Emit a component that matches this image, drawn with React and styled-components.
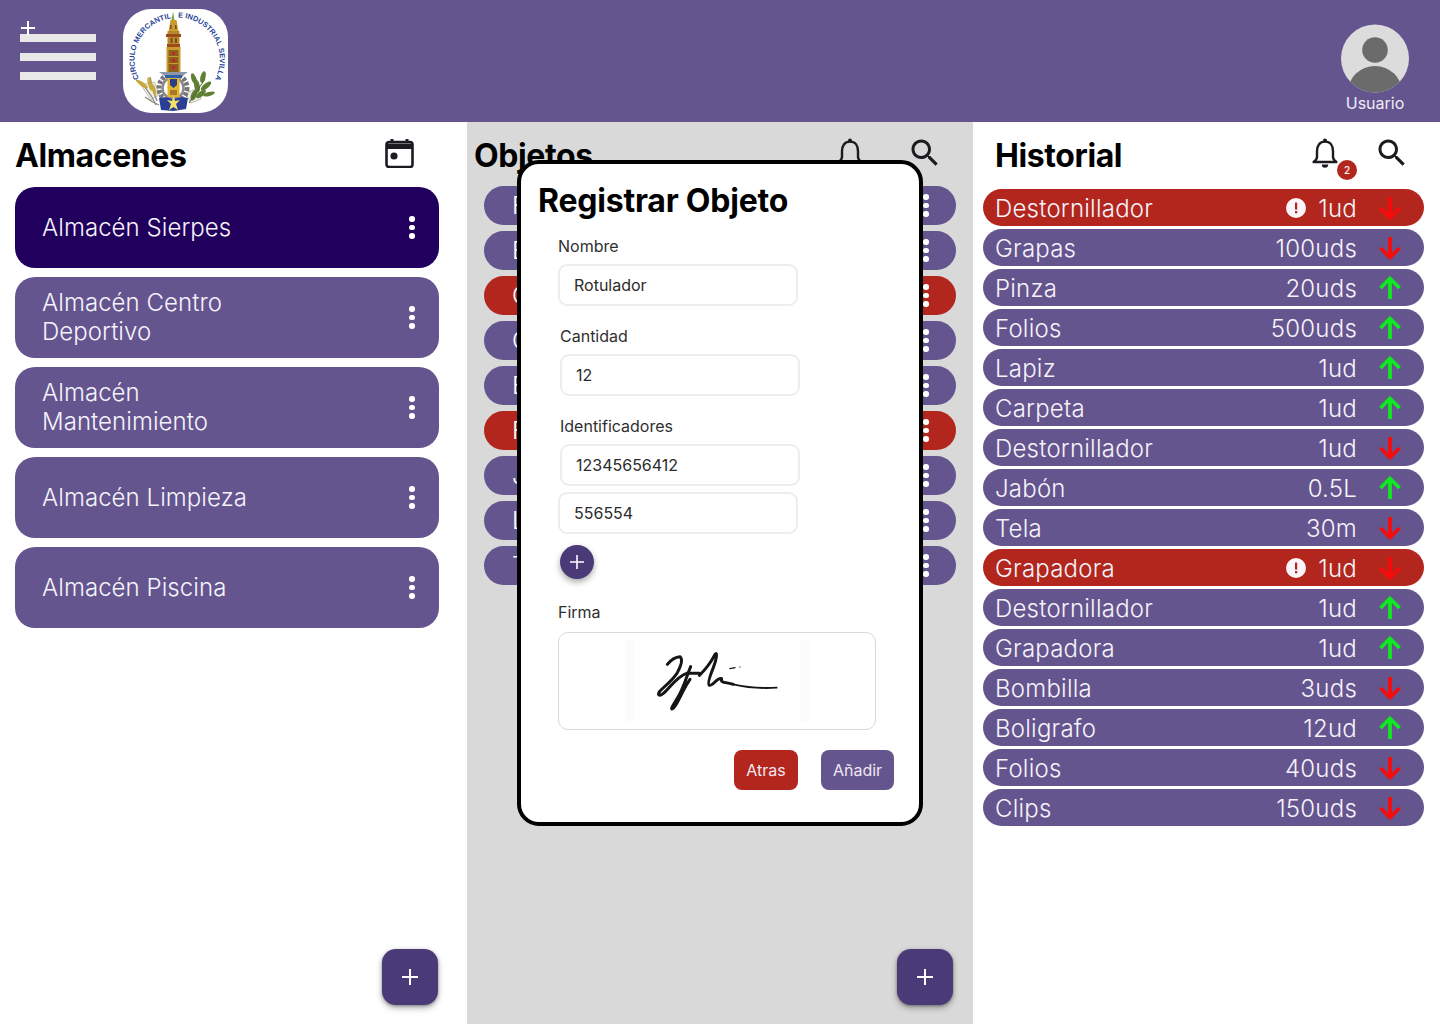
import React from "react";
import styled, { createGlobalStyle } from "styled-components";

const Global = createGlobalStyle`
  html, body { margin: 0; padding: 0; background: #fff; }
  body { font-family: Inter, "Liberation Sans", sans-serif; overflow: hidden; }
  * { box-sizing: border-box; }
`;

const Page = styled.div`
  width: 1440px;
  height: 1024px;
  display: flex;
  flex-direction: column;
  position: relative;
  overflow: hidden;
`;
const TopBar = styled.header`
  height: 122px;
  flex: none;
  background: #65558f;
  display: flex;
  align-items: flex-start;
  padding: 9px 31px 0 20px;
  position: relative;
`;
const Burger = styled.div`
  width: 76px;
  margin-top: 25px;
  display: flex;
  flex-direction: column;
  gap: 11px;
`;
const BurgerBar = styled.span`
  display: block;
  height: 8px;
  background: #e8e8e8;
`;
const CornerPlus = styled.svg`
  position: absolute;
  left: 21px;
  top: 21px;
`;
const LogoTile = styled.div`
  width: 105px;
  height: 104px;
  margin-left: 27px;
  border-radius: 28px;
  background: #fff;
  overflow: hidden;
`;
const UserBox = styled.div`
  margin-left: auto;
  width: 68px;
  margin-top: 15px;
  display: flex;
  flex-direction: column;
  align-items: center;
  color: #f0edf7;
  font-size: 16px;
  line-height: 20px;
`;
const Columns = styled.main`
  flex: 1;
  display: grid;
  grid-template-columns: 467px 506px 467px;
`;
const Column = styled.section`
  position: relative;
  background: ${(p) => p.$bg || "#fff"};
  padding: 13px ${(p) => p.$right}px 0 ${(p) => p.$left}px;
`;
const ColumnHead = styled.div`
  display: flex;
  align-items: flex-start;
  height: 40px;
  margin-left: ${(p) => p.$indent}px;
  margin-bottom: ${(p) => p.$gap}px;
`;
const Heading = styled.h1`
  margin: 0;
  flex: 1;
  color: #000;
  font-size: 32px;
  line-height: 42px;
  height: 40px;
  font-weight: 700;
  letter-spacing: -0.4px;
`;
const HeadIcon = styled.svg`
  flex: none;
  display: block;
  margin-top: ${(p) => p.$top || 0}px;
  margin-right: ${(p) => p.$mr || 0}px;
`;
const BellWrap = styled.div`
  position: relative;
  flex: none;
  width: 26px;
  height: 31px;
  margin-top: 3px;
  margin-right: ${(p) => p.$mr}px;
`;
const Badge = styled.span`
  position: absolute;
  left: 25px;
  top: 22px;
  width: 20px;
  height: 20px;
  border-radius: 50%;
  background: #b3261e;
  color: #fff;
  font-size: 10px;
  font-weight: 500;
  line-height: 20px;
  text-align: center;
`;
const StoreList = styled.div`
  display: flex;
  flex-direction: column;
  gap: 9px;
`;
const StoreCard = styled.div`
  height: 81px;
  border-radius: 20px;
  background: ${(p) => (p.$active ? "#21005d" : "#65558f")};
  color: #f5f3fa;
  display: flex;
  align-items: center;
  padding: 0 17px 0 27px;
  font-size: 24px;
  line-height: 29px;
  font-weight: 350;
  letter-spacing: 0.06px;
`;
const CardName = styled.span`
  flex: 1;
  max-width: 250px;
  margin-right: auto;
  padding-bottom: 1px;
`;
const Dots = styled.span`
  flex: none;
  display: flex;
  flex-direction: column;
  gap: 3px;
  width: 6px;
  margin-left: auto;
  margin-right: ${(p) => p.$mr || 0}px;
`;
const Dot = styled.i`
  display: block;
  width: 5.5px;
  height: 5.5px;
  border-radius: 50%;
  background: #fff;
`;
const ObjectList = styled.div`
  display: flex;
  flex-direction: column;
  gap: 6px;
  margin-top: -1px;
`;
const ObjectRow = styled.div`
  height: 39px;
  border-radius: 20px;
  background: ${(p) => (p.$alert ? "#b3261e" : "#65558f")};
  color: #fff;
  display: flex;
  align-items: center;
  padding: 0 28px;
  font-size: 24px;
  font-weight: 350;
`;
const HistoryList = styled.div`
  display: flex;
  flex-direction: column;
  gap: 3px;
`;
const HistoryRow = styled.div`
  height: 37px;
  border-radius: 19px;
  background: ${(p) => (p.$alert ? "#b3261e" : "#65558f")};
  color: #f5f3fa;
  display: flex;
  align-items: center;
  padding: 0 22px 0 12px;
  font-size: 24px;
  line-height: 37px;
  font-weight: 350;
  letter-spacing: 0.22px;
`;
const HistoryName = styled.span`
  flex: 1;
  padding-top: 2px;
`;
const Qty = styled.span`
  margin: 0 21px 0 12px;
  padding-top: 2px;
`;
const Fab = styled.button`
  position: absolute;
  right: ${(p) => p.$right}px;
  bottom: 19px;
  width: 56px;
  height: 56px;
  border: 0;
  padding: 0;
  border-radius: 14px;
  background: #4a3a78;
  box-shadow: 0 3px 6px rgba(0, 0, 0, 0.3), 0 1px 3px rgba(0, 0, 0, 0.3);
  display: flex;
  align-items: center;
  justify-content: center;
`;
const Modal = styled.form`
  position: absolute;
  left: 50px;
  top: 38px;
  width: 406px;
  height: 666px;
  background: #fff;
  border: 4px solid #000;
  border-radius: 22px;
  padding: 16px 25px 0 17px;
  display: flex;
  flex-direction: column;
  align-items: flex-start;
`;
const ModalTitle = styled.h2`
  margin: 0;
  height: 40px;
  color: #000;
  font-size: 32px;
  line-height: 42px;
  font-weight: 700;
  letter-spacing: -0.22px;
`;
const Label = styled.label`
  display: block;
  height: 19px;
  margin-top: ${(p) => p.$top}px;
  margin-left: ${(p) => p.$left}px;
  color: #2f2f2f;
  font-size: 16px;
  line-height: 19px;
`;
const Field = styled.div`
  width: 240px;
  height: 42px;
  margin-top: ${(p) => p.$top}px;
  margin-left: ${(p) => p.$left}px;
  border: 2px solid #ededed;
  border-radius: 9px;
  background: #fff;
  color: #2a2a2a;
  font-size: 16px;
  line-height: 38px;
  padding-left: 14px;
`;
const RoundAdd = styled.button`
  width: 34px;
  height: 34px;
  margin: 11px 0 0 22px;
  padding: 0;
  border: 0;
  border-radius: 50%;
  background: #4a3a78;
  box-shadow: 0 3px 6px rgba(0, 0, 0, 0.35);
  display: flex;
  align-items: center;
  justify-content: center;
`;
const SignBox = styled.div`
  width: 318px;
  height: 98px;
  margin: 10px 0 0 20px;
  border: 1px solid #d9d9d9;
  border-radius: 10px;
  background: #fff;
  overflow: hidden;
`;
const Actions = styled.div`
  align-self: stretch;
  display: flex;
  justify-content: flex-end;
  gap: 23px;
  margin-top: 20px;
`;
const ActionButton = styled.button`
  height: 40px;
  width: ${(p) => p.$w}px;
  border: 0;
  padding: 0;
  border-radius: 8px;
  background: ${(p) => p.$bg};
  color: #f0e6ef;
  font-family: inherit;
  font-size: 16px;
`;

const Plus = ({ size = 16, w = 2 }) => (
  <svg width={size} height={size} viewBox="0 0 16 16" fill="none">
    <path d="M8 0v16M0 8h16" stroke="#fff" strokeWidth={w} />
  </svg>
);
const MoreDots = ({ mr }) => (
  <Dots $mr={mr}>
    <Dot />
    <Dot />
    <Dot />
  </Dots>
);
const Bell = ({ mr, count }) => (
  <BellWrap $mr={mr}>
    <svg width="26" height="31" viewBox="0 0 26 31" fill="none">
      <circle cx="13" cy="2.4" r="2" fill="#1d1b20" />
      <path
        d="M13 3.6C7.4 3.6 5 8 5 13v6c0 2-1.4 3.6-3.4 5h22.8c-2-1.4-3.4-3-3.4-5v-6c0-5-2.4-9.4-8-9.4z"
        stroke="#1d1b20"
        strokeWidth="2.4"
        strokeLinejoin="round"
      />
      <path d="M9.8 26.6h6.4a3.2 3.2 0 0 1-6.4 0z" fill="#1d1b20" />
    </svg>
    {count ? <Badge>{count}</Badge> : null}
  </BellWrap>
);
const Search = ({ mr }) => (
  <HeadIcon $mr={mr} width="36" height="36" viewBox="0 0 24 24" fill="#1d1b20">
    <path d="M15.5 14h-.79l-.28-.27C15.41 12.59 16 11.11 16 9.5 16 5.91 13.09 3 9.5 3S3 5.91 3 9.5 5.91 16 9.5 16c1.61 0 3.09-.59 4.23-1.57l.27.28v.79l5 4.99L20.49 19l-4.99-5zm-6 0C7.01 14 5 11.99 5 9.5S7.01 5 9.5 5 14 7.01 14 9.5 11.99 14 9.5 14z" />
  </HeadIcon>
);
const Arrow = ({ up }) => (
  <svg width="24" height="24" viewBox="0 0 24 24" fill="none">
    {up ? (
      <path d="M12 23V2.500M2.500 12L12 2.500l9.500 9.500" stroke="#10e81f" strokeWidth="3.800" />
    ) : (
      <path d="M12 1v20.500M2.500 12l9.500 9.500 9.500-9.500" stroke="#f80b0b" strokeWidth="3.800" />
    )}
  </svg>
);
const AlertIcon = () => (
  <svg width="20" height="20" viewBox="0 0 20 20">
    <circle cx="10" cy="10" r="10" fill="#faf5fa" />
    <rect x="9" y="4.600" width="2.200" height="7" fill="#b3261e" />
    <rect x="9" y="13" width="2.200" height="2.300" fill="#b3261e" />
  </svg>
);
const Logo = () => (
  <svg width="105" height="104" viewBox="0 0 105 104">
    <defs>
      <path id="arcLeft" d="M16 69.500A41.500 41.500 0 0 1 47.500 9.500" />
      <path id="arcRight" d="M55 8.500A42 42 0 0 1 92 70" />
    </defs>
    <g fill="#1f3f97" fontFamily="'Liberation Sans', sans-serif" fontWeight="700" fontSize="7.400">
      <text>
        <textPath href="#arcLeft" textLength="80">CIRCULO MERCANTIL</textPath>
      </text>
      <text>
        <textPath href="#arcRight" textLength="86">E INDUSTRIAL SEVILLA</textPath>
      </text>
    </g>
    <g stroke="#bdbdb5" strokeWidth="1" fill="#efefe8">
      <path d="M18 76l13-3 6 12-9 6zM62 84l12-4 4 10-10 4z" />
    </g>
    <circle cx="50" cy="79" r="14" fill="none" stroke="#77777a" strokeWidth="5" strokeDasharray="3.200 1.600" />
    <circle cx="50" cy="79" r="10.500" fill="none" stroke="#8b8b8b" strokeWidth="2.500" />
    <path d="M50 2.500l1.500 8.500h-3z" fill="#8ba54a" />
    <path d="M47.500 11h6l2 12h-10z" fill="#c99a2e" />
    <path d="M44.500 22h12v15h-12z" fill="#b88a2c" />
    <path d="M47 16h1.500v4H47zM52 16h1.500v4H52zM47.500 29h2v5h-2zM52 29h2v5h-2z" fill="#7a4b1b" />
    <path d="M43 25h15v3H43zM44 35h13v3H44z" fill="#9a4a1d" />
    <path d="M43.500 38h14v30h-14z" fill="#c99a2c" />
    <path d="M45.500 41h10v23h-10z" fill="#8d5f1f" />
    <path d="M45.500 47h10v1h-10zM45.500 54h10v1h-10z" fill="#c99a2c" />
    <path d="M49 43h3v3h-3zM49 50h3v3h-3zM49 57h3v3h-3z" fill="#c0272d" />
    <path d="M36 63h29l-7 5H43z" fill="#8e97a8" />
    <path d="M42 66h17v3H42z" fill="#2f5fa5" />
    <path d="M44.500 69h12v19h-12z" fill="#e3b52f" />
    <path d="M47 70h7v6l-3.500 3-3.500-3z" fill="#2a3f86" />
    <path d="M47 81h7v5h-7z" fill="#a8792a" />
    <path d="M36 89c8-2 12 0 14.500 2 2.500-2 7-4 14.500-2l-2 11-12.500 2-12.500-1z" fill="#2c3f96" />
    <path d="M50.500 87l1.500 5 5-1-4 4 2 6-4.500-3-4.500 3 2-6-4-4 5 1z" fill="#f3e36a" />
    <g stroke="#8a8a7a" strokeWidth="1.300" fill="none">
      <path d="M13 71c7 4 15 14 20 25" />
      <path d="M27 68c2 9 4 17 7 24" />
      <path d="M22 88c4 3 9 6 14 8" />
    </g>
    <g fill="#c5a93a">
      <ellipse cx="19" cy="75" rx="7" ry="2" transform="rotate(35 19 75)" />
      <ellipse cx="27" cy="75" rx="2" ry="7" transform="rotate(-15 27 75)" />
      <ellipse cx="31" cy="81" rx="1.800" ry="6" transform="rotate(-15 31 81)" />
    </g>
    <g fill="#5f7f35">
      <ellipse cx="71" cy="70" rx="2.500" ry="6" transform="rotate(-20 71 70)" />
      <ellipse cx="80" cy="68" rx="2.500" ry="6" transform="rotate(15 80 68)" />
      <ellipse cx="83" cy="77" rx="2.500" ry="6.500" transform="rotate(50 83 77)" />
      <ellipse cx="74" cy="77" rx="2.800" ry="6.500" transform="rotate(-10 74 77)" />
      <ellipse cx="86" cy="85" rx="2" ry="6" transform="rotate(75 86 85)" />
      <ellipse cx="71" cy="86" rx="2.800" ry="6" transform="rotate(25 71 86)" />
      <ellipse cx="78" cy="85" rx="2.500" ry="6" transform="rotate(50 78 85)" />
    </g>
    <path d="M66 94l16-24" stroke="#4f6b2b" strokeWidth="1" fill="none" />
  </svg>
);
const Signature = () => (
  <svg width="316" height="96" viewBox="0 0 316 96">
    <rect x="66" y="7" width="10" height="82" fill="#fcfcfc" />
    <rect x="241" y="7" width="10" height="82" fill="#fcfcfc" />
    <g transform="translate(61 3) scale(0.3333)" fill="none" stroke="#151515" strokeLinecap="round" strokeLinejoin="round" strokeWidth="9">
      <path d="M142 85C150 75 165 63 180 62C190 70 180 95 172 110C160 130 135 150 120 165C110 178 118 182 130 172C150 155 170 122 200 112L238 112" />
      <path d="M212 92C200 120 190 160 170 190C158 210 150 222 158 218C170 214 185 165 210 130" />
      <path d="M238 118C262 95 275 75 285 55C293 45 290 70 280 95C270 120 262 145 268 148C280 150 292 122 305 128C300 142 320 138 340 145" />
      <path d="M340 145C370 152 420 158 470 155" strokeWidth="5.500" />
      <path d="M330 98L345 95" strokeWidth="4" />
      <path d="M359 93h1" strokeWidth="3" />
    </g>
  </svg>
);

const stores = [
  { name: "Almacén Sierpes", active: true },
  { name: "Almacén Centro Deportivo" },
  { name: "Almacén Mantenimiento" },
  { name: "Almacén Limpieza" },
  { name: "Almacén Piscina" },
];
const objects = [
  ["Folios"],
  ["Etiquetas"],
  ["Carpeta", true],
  ["Clips"],
  ["Escoba"],
  ["Fregona", true],
  ["Jabón"],
  ["Lapiz"],
  ["Tela"],
];
const history = [
  ["Destornillador", "1ud", false, true],
  ["Grapas", "100uds", false],
  ["Pinza", "20uds", true],
  ["Folios", "500uds", true],
  ["Lapiz", "1ud", true],
  ["Carpeta", "1ud", true],
  ["Destornillador", "1ud", false],
  ["Jabón", "0.5L", true],
  ["Tela", "30m", false],
  ["Grapadora", "1ud", false, true],
  ["Destornillador", "1ud", true],
  ["Grapadora", "1ud", true],
  ["Bombilla", "3uds", false],
  ["Boligrafo", "12ud", true],
  ["Folios", "40uds", false],
  ["Clips", "150uds", false],
];

export default function App() {
  return (
    <Page>
      <Global />
      <TopBar>
        <Burger>
          <BurgerBar />
          <BurgerBar />
          <BurgerBar />
        </Burger>
        <CornerPlus width="14" height="14" viewBox="0 0 14 14">
          <path d="M7 0v14M0 7h14" stroke="#fff" strokeWidth="2" />
        </CornerPlus>
        <LogoTile>
          <Logo />
        </LogoTile>
        <UserBox>
          <svg width="68" height="69" viewBox="0 0 68 69">
            <defs>
              <clipPath id="avatarClip">
                <circle cx="34" cy="34.500" r="34" />
              </clipPath>
            </defs>
            <circle cx="34" cy="34.500" r="34" fill="#dcdcdc" />
            <circle cx="34" cy="26" r="12.800" fill="#6b6b6b" />
            <ellipse cx="34" cy="68" rx="27" ry="26" fill="#6b6b6b" clipPath="url(#avatarClip)" />
          </svg>
          <span>Usuario</span>
        </UserBox>
      </TopBar>
      <Columns>
        <Column $left={15} $right={28}>
          <ColumnHead $indent={0} $gap={12}>
            <Heading>Almacenes</Heading>
            <HeadIcon $top={3} $mr={25} width="29" height="30" viewBox="0 0 29 30">
              <path d="M7 1v6M22 1v6" stroke="#1d1b20" strokeWidth="3" />
              <rect x="1.500" y="4" width="26" height="25" rx="2.500" fill="#fff" stroke="#1d1b20" strokeWidth="2.600" />
              <path d="M1.500 5.500h26V11h-26z" fill="#1d1b20" />
              <circle cx="9" cy="18" r="3.600" fill="#1d1b20" />
            </HeadIcon>
          </ColumnHead>
          <StoreList>
            {stores.map((s) => (
              <StoreCard key={s.name} $active={s.active}>
                <CardName>{s.name}</CardName>
                <MoreDots mr={7} />
              </StoreCard>
            ))}
          </StoreList>
          <Fab $right={29} type="button">
            <Plus />
          </Fab>
        </Column>
        <Column $bg="#d9d9d9" $left={17} $right={17}>
          <ColumnHead $indent={-10} $gap={12}>
            <Heading>Objetos</Heading>
            <Bell mr={44} />
            <Search mr={13} />
          </ColumnHead>
          <ObjectList>
            {objects.map(([name, alert], i) => (
              <ObjectRow key={i} $alert={alert}>
                {name}
                <MoreDots mr={-1} />
              </ObjectRow>
            ))}
          </ObjectList>
          <Fab $right={20} type="button">
            <Plus />
          </Fab>
          <Modal>
            <ModalTitle>Registrar Objeto</ModalTitle>
            <Label $top={17} $left={20}>Nombre</Label>
            <Field $top={8} $left={20}>Rotulador</Field>
            <Label $top={21} $left={22}>Cantidad</Label>
            <Field $top={8} $left={22}>12</Field>
            <Label $top={21} $left={22}>Identificadores</Label>
            <Field $top={8} $left={22}>12345656412</Field>
            <Field $top={6} $left={20}>556554</Field>
            <RoundAdd type="button">
              <Plus size={14} w={1.8} />
            </RoundAdd>
            <Label $top={24} $left={20}>Firma</Label>
            <SignBox>
              <Signature />
            </SignBox>
            <Actions>
              <ActionButton type="button" $w={64} $bg="#b3261e">Atras</ActionButton>
              <ActionButton type="button" $w={73} $bg="#65558f">Añadir</ActionButton>
            </Actions>
          </Modal>
        </Column>
        <Column $left={10} $right={16}>
          <ColumnHead $indent={12} $gap={14}>
            <Heading>Historial</Heading>
            <Bell mr={36} count={2} />
            <Search mr={14} />
          </ColumnHead>
          <HistoryList>
            {history.map(([name, qty, up, alert], i) => (
              <HistoryRow key={i} $alert={alert}>
                <HistoryName>{name}</HistoryName>
                {alert ? <AlertIcon /> : null}
                <Qty>{qty}</Qty>
                <Arrow up={up} />
              </HistoryRow>
            ))}
          </HistoryList>
        </Column>
      </Columns>
    </Page>
  );
}
